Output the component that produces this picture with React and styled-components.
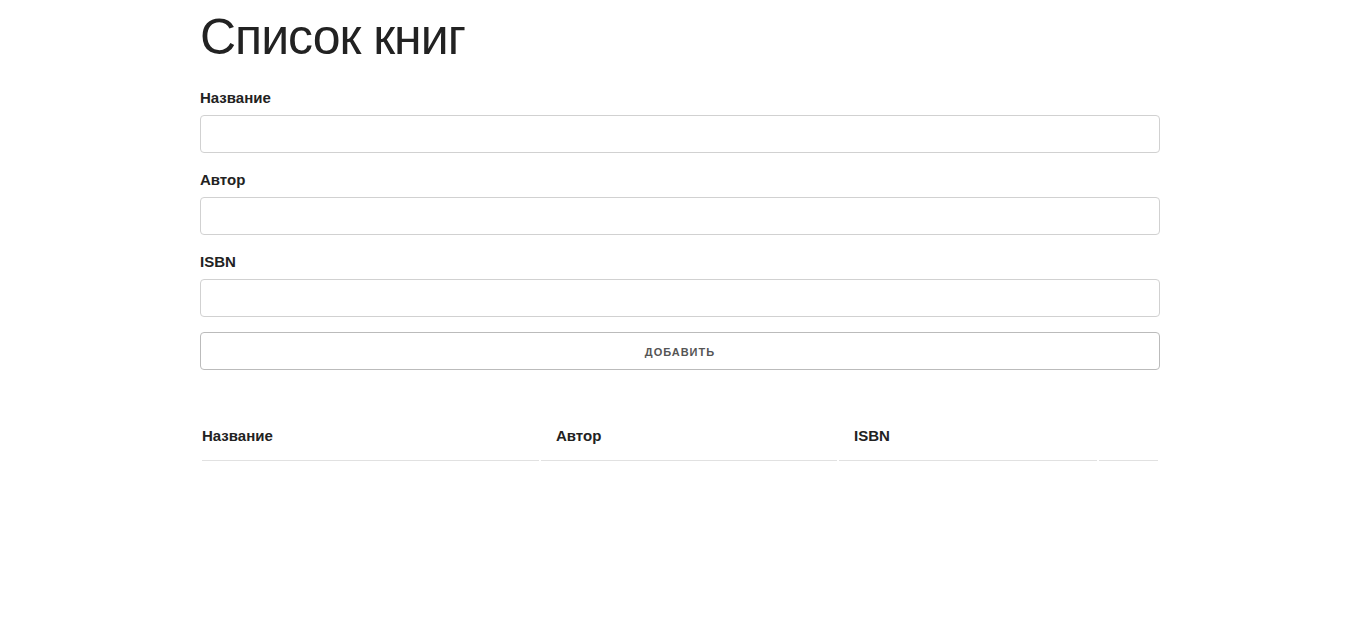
import styled, { createGlobalStyle } from "styled-components";

const GlobalStyle = createGlobalStyle`
  html, body {
    margin: 0;
    padding: 0;
    background: #fff;
  }
  body {
    font-family: "Liberation Sans", Arial, Helvetica, sans-serif;
    font-size: 15px;
    line-height: 1.6;
    color: #222;
  }
  * {
    box-sizing: border-box;
  }
`;

const Container = styled.div`
  width: 960px;
  margin-left: 200px;
  padding-top: 7px;
`;

const Title = styled.h1`
  margin: 0 0 19px;
  font-size: 50px;
  font-weight: 300;
  line-height: 1.2;
  letter-spacing: -1px;
  color: #222;
`;

const Form = styled.form`
  display: flex;
  flex-direction: column;
`;

const Label = styled.label`
  display: block;
  font-weight: 600;
  margin-bottom: 5px;
`;

const Input = styled.input`
  display: block;
  width: 100%;
  height: 38px;
  padding: 6px 10px;
  margin: 0 0 15px;
  background: #fff;
  border: 1px solid #d1d1d1;
  border-radius: 4px;
  box-shadow: none;
  font: inherit;
  outline: none;
`;

const Button = styled.button`
  display: block;
  width: 100%;
  height: 38px;
  padding: 0 30px;
  margin: 0;
  color: #555;
  background: transparent;
  text-align: center;
  font-family: inherit;
  font-size: 11px;
  font-weight: 600;
  line-height: 38px;
  letter-spacing: 1px;
  text-transform: uppercase;
  border: 1px solid #bbb;
  border-radius: 4px;
  cursor: pointer;
`;

const Table = styled.table`
  width: 100%;
  margin-top: 40px;
  table-layout: fixed;
  border-collapse: separate;
  border-spacing: 2px;
`;

const Th = styled.th`
  width: ${(p) => p.$w}px;
  padding: 12px 15px;
  text-align: left;
  font-weight: 600;
  border-bottom: 1px solid #e1e1e1;
  &:first-child {
    padding-left: 0;
  }
  &:last-child {
    padding-right: 0;
  }
`;

const columns = [
  { title: "Название", width: 337 },
  { title: "Автор", width: 296 },
  { title: "ISBN", width: 258 },
  { title: "", width: 59 },
];

const fields = ["Название", "Автор", "ISBN"];

export default function App() {
  return (
    <>
      <GlobalStyle />
      <Container>
        <Title>Список книг</Title>
        <Form onSubmit={(e) => e.preventDefault()}>
          {fields.map((f) => (
            <div key={f}>
              <Label>{f}</Label>
              <Input type="text" />
            </div>
          ))}
          <Button type="submit">Добавить</Button>
        </Form>
        <Table>
          <thead>
            <tr>
              {columns.map((c, i) => (
                <Th key={i} $w={c.width}>
                  {c.title}
                </Th>
              ))}
            </tr>
          </thead>
          <tbody></tbody>
        </Table>
      </Container>
    </>
  );
}
